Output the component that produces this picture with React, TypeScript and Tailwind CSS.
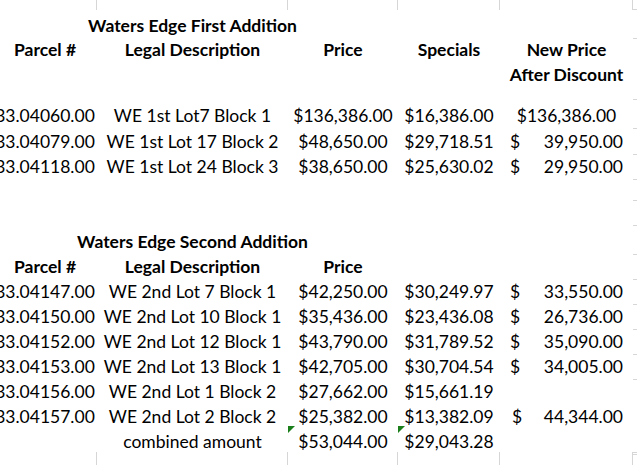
const COLS = "grid grid-cols-[104px_191px_110px_102px_133px_1fr]";

type NewPrice = { centered?: string; amount?: string; shift?: boolean } | null;

type DataRow = {
  parcel: string;
  desc: string;
  price: string;
  specials: string;
  np: NewPrice;
  height?: string;
  tick?: boolean;
};

const firstAddition: DataRow[] = [
  { parcel: "33.04060.00", desc: "WE 1st Lot7 Block 1", price: "$136,386.00", specials: "$16,386.00", np: { centered: "$136,386.00" }, height: "h-[26px]" },
  { parcel: "33.04079.00", desc: "WE 1st Lot 17 Block 2", price: "$48,650.00", specials: "$29,718.51", np: { amount: "39,950.00" } },
  { parcel: "33.04118.00", desc: "WE 1st Lot 24 Block 3", price: "$38,650.00", specials: "$25,630.02", np: { amount: "29,950.00" } },
];

const secondAddition: DataRow[] = [
  { parcel: "33.04147.00", desc: "WE 2nd Lot 7 Block 1", price: "$42,250.00", specials: "$30,249.97", np: { amount: "33,550.00" } },
  { parcel: "33.04150.00", desc: "WE 2nd Lot 10 Block 1", price: "$35,436.00", specials: "$23,436.08", np: { amount: "26,736.00" } },
  { parcel: "33.04152.00", desc: "WE 2nd Lot 12 Block 1", price: "$43,790.00", specials: "$31,789.52", np: { amount: "35,090.00" } },
  { parcel: "33.04153.00", desc: "WE 2nd Lot 13 Block 1", price: "$42,705.00", specials: "$30,704.54", np: { amount: "34,005.00" } },
  { parcel: "33.04156.00", desc: "WE 2nd Lot 1 Block 2", price: "$27,662.00", specials: "$15,661.19", np: null, tick: false },
  { parcel: "33.04157.00", desc: "WE 2nd Lot 2 Block 2", price: "$25,382.00", specials: "$13,382.09", np: { amount: "44,344.00", shift: true }, tick: false },
];

const Cell = ({ children, className = "" }: { children?: React.ReactNode; className?: string }) => (
  <div className={`flex items-center justify-center whitespace-nowrap pt-[3px] ${className}`}>{children}</div>
);

// little green error marker in the corner of a cell
const ErrorMark = () => (
  <div className="absolute top-0 left-0 h-0 w-0 border-t-[7px] border-r-[7px] border-t-[#1a7f1a] border-r-transparent" />
);

function Row({ cells, height = "h-[25px]", tick = true }: { cells: React.ReactNode[]; height?: string; tick?: boolean }) {
  return (
    <div className={`${COLS} ${height}`}>
      {cells.map((c, i) => (
        <Cell key={i} className="relative">
          {c}
        </Cell>
      ))}
      <div className={tick ? "border-b border-[#d6d6d6]" : ""} />
    </div>
  );
}

function NewPriceCell({ np }: { np: NewPrice }) {
  if (!np) return null;
  if (np.centered) return <span>{np.centered}</span>;
  return (
    <div className="flex w-full items-center justify-between pr-[10px] pl-[10px]">
      <span className={np.shift ? "ml-[2px]" : ""}>$</span>
      <span>{np.amount}</span>
    </div>
  );
}

function dataCells(r: DataRow) {
  return [
    <span>{r.parcel}</span>,
    <span>{r.desc}</span>,
    <span>{r.price}</span>,
    <span>{r.specials}</span>,
    <NewPriceCell np={r.np} />,
  ];
}

const GridStub = ({ height }: { height: string }) => (
  <div className={`${COLS} ${height}`}>
    {[0, 1, 2, 3, 4].map((i) => (
      <div key={i} className="border-r border-[#d6d6d6]" />
    ))}
    <div className="border-t border-[#d6d6d6]" />
  </div>
);

export default function App() {
  return (
    <div className="h-[465px] w-[637px] overflow-hidden bg-white font-['Lato',sans-serif] text-[17.5px] text-black">
      <div className="-ml-[7px] flex flex-col">
        {/* top edge of the sheet grid */}
        <div className={`${COLS} h-[10px]`}>
          {[0, 1, 2, 3, 4].map((i) => (
            <div key={i} className="border-r border-[#d6d6d6]" />
          ))}
          <div className="border-b border-[#d6d6d6]" />
        </div>

        <Row cells={[null, <b>Waters Edge First Addition</b>, null, null, null]} />

        <div className={`${COLS} h-[65px] pt-[3px] font-bold`}>
          <div className="flex h-[25px] items-center justify-center">Parcel #</div>
          <div className="flex h-[25px] items-center justify-center">Legal Description</div>
          <div className="flex h-[25px] items-center justify-center">Price</div>
          <div className="flex h-[25px] items-center justify-center">Specials</div>
          <div className="flex flex-col items-center">
            <div className="flex h-[25px] items-center">New Price</div>
            <div className="flex h-[25px] items-center">After Discount</div>
          </div>
          <div className="-mt-[3px] border-b border-[#d6d6d6]" />
        </div>

        {firstAddition.map((r) => (
          <Row key={r.parcel} cells={dataCells(r)} height={r.height} />
        ))}

        <Row cells={[null, null, null, null, null]} />
        <Row cells={[null, null, null, null, null]} />

        <Row cells={[null, <b>Waters Edge Second Addition</b>, null, null, null]} />
        <Row cells={[<b>Parcel #</b>, <b>Legal Description</b>, <b>Price</b>, null, null]} />

        {secondAddition.map((r) => (
          <Row key={r.parcel} cells={dataCells(r)} tick={r.tick} />
        ))}

        <Row
          height="h-[26px]"
          cells={[
            null,
            <span>combined amount</span>,
            <>
              <ErrorMark />
              <span>$53,044.00</span>
            </>,
            <>
              <ErrorMark />
              <span>$29,043.28</span>
            </>,
            null,
          ]}
        />

        <GridStub height="h-[20px]" />
      </div>
    </div>
  );
}
